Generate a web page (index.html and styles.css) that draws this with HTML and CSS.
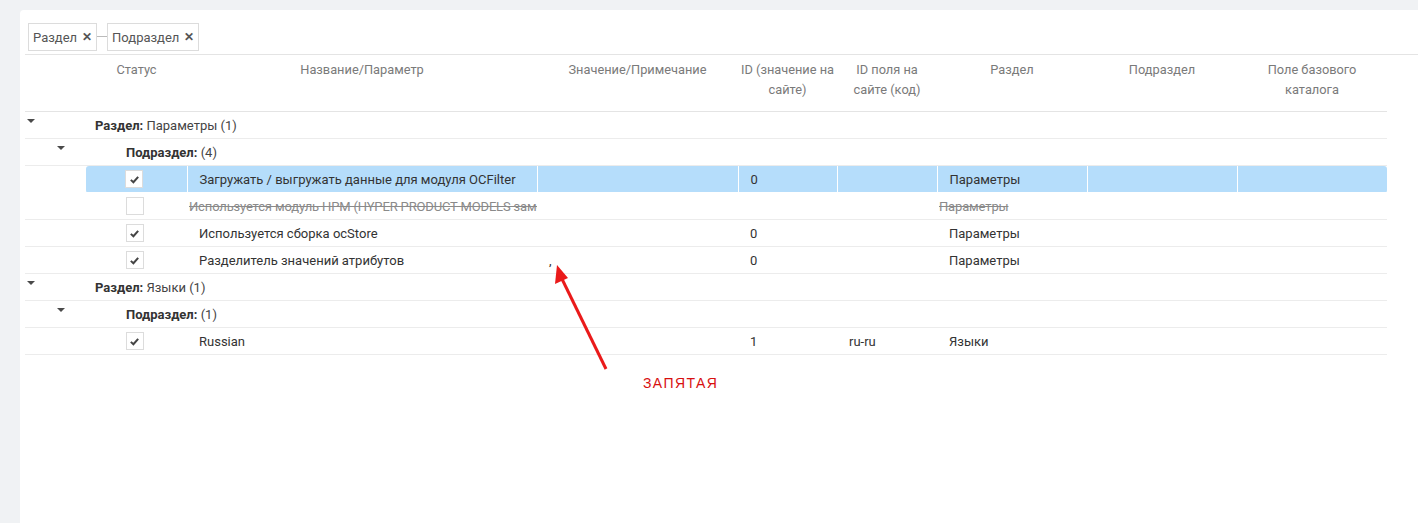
FILE: index.html
```html
<!DOCTYPE html>
<html lang="ru">
<head>
<meta charset="utf-8">
<title>Параметры</title>
<link rel="stylesheet" href="styles.css">
</head>
<body>
<div class="card">
  <div class="group-panel">
    <span class="chip">Раздел <span class="chip-x">✕</span></span>
    <span class="chip-link"></span>
    <span class="chip">Подраздел <span class="chip-x">✕</span></span>
  </div>
  <table class="grid">
    <colgroup>
      <col class="c-exp1"><col class="c-exp2"><col class="c-status"><col class="c-name"><col class="c-value"><col class="c-id"><col class="c-code"><col class="c-sec"><col class="c-sub"><col class="c-base">
    </colgroup>
    <thead>
      <tr class="head">
        <th></th><th></th>
        <th>Статус</th>
        <th>Название/Параметр</th>
        <th>Значение/Примечание</th>
        <th class="h-narrow">ID (значение на сайте)</th>
        <th class="h-narrow">ID поля на сайте (код)</th>
        <th>Раздел</th>
        <th>Подраздел</th>
        <th>Поле базового каталога</th>
      </tr>
    </thead>
    <tbody>
      <tr class="group">
        <td class="exp"><span class="tri"></span></td>
        <td colspan="9" class="g1"><b>Раздел:</b> Параметры (1)</td>
      </tr>
      <tr class="group">
        <td></td>
        <td class="exp"><span class="tri"></span></td>
        <td colspan="8" class="g2"><b>Подраздел:</b> (4)</td>
      </tr>
      <tr class="row selected">
        <td></td><td></td>
        <td class="chk"><span class="box"><svg viewBox="0 0 12 12" class="tick"><path d="M2 6.4 L4.8 9 L10 3.2" /></svg></span></td>
        <td class="first">Загружать / выгружать данные для модуля OCFilter</td>
        <td></td>
        <td>0</td>
        <td></td>
        <td>Параметры</td>
        <td></td>
        <td class="last"></td>
      </tr>
      <tr class="row struck">
        <td></td><td></td>
        <td class="chk"><span class="box"></span></td>
        <td class="clip">Используется модуль HPM (HYPER PRODUCT MODELS замена)</td>
        <td></td>
        <td></td>
        <td></td>
        <td>Параметры</td>
        <td></td>
        <td></td>
      </tr>
      <tr class="row">
        <td></td><td></td>
        <td class="chk"><span class="box"><svg viewBox="0 0 12 12" class="tick"><path d="M2 6.4 L4.8 9 L10 3.2" /></svg></span></td>
        <td>Используется сборка ocStore</td>
        <td></td>
        <td>0</td>
        <td></td>
        <td>Параметры</td>
        <td></td>
        <td></td>
      </tr>
      <tr class="row">
        <td></td><td></td>
        <td class="chk"><span class="box"><svg viewBox="0 0 12 12" class="tick"><path d="M2 6.4 L4.8 9 L10 3.2" /></svg></span></td>
        <td>Разделитель значений атрибутов</td>
        <td class="comma">,</td>
        <td>0</td>
        <td></td>
        <td>Параметры</td>
        <td></td>
        <td></td>
      </tr>
      <tr class="group">
        <td class="exp"><span class="tri"></span></td>
        <td colspan="9" class="g1"><b>Раздел:</b> Языки (1)</td>
      </tr>
      <tr class="group">
        <td></td>
        <td class="exp"><span class="tri"></span></td>
        <td colspan="8" class="g2"><b>Подраздел:</b> (1)</td>
      </tr>
      <tr class="row">
        <td></td><td></td>
        <td class="chk"><span class="box"><svg viewBox="0 0 12 12" class="tick"><path d="M2 6.4 L4.8 9 L10 3.2" /></svg></span></td>
        <td>Russian</td>
        <td></td>
        <td>1</td>
        <td>ru-ru</td>
        <td>Языки</td>
        <td></td>
        <td></td>
      </tr>
    </tbody>
  </table>
</div>
<svg class="annot-arrow" width="1418" height="523" viewBox="0 0 1418 523">
  <line x1="606" y1="369" x2="562" y2="279" />
  <polygon points="557,265 555,284 568,278" />
</svg>
<div class="annot-label">ЗАПЯТАЯ</div>
</body>
</html>
```
FILE: styles.css
```css
html, body {
  margin: 0;
  padding: 0;
}
body {
  background: #f0f2f4;
  font-family: Roboto, "Noto Sans", sans-serif;
  position: relative;
  height: 523px;
  overflow: hidden;
}
.card {
  margin: 10px 0 0 20px;
  background: #fff;
  border-radius: 4px 0 0 0;
  height: 513px;
  padding-left: 5px;
  box-sizing: border-box;
}
.group-panel {
  display: flex;
  align-items: center;
  padding: 13px 0 3px 3px;
  border-bottom: 1px solid #e4e4e4;
}
.chip {
  display: inline-flex;
  align-items: center;
  height: 26px;
  border: 1px solid #dcdcdc;
  padding: 0 4px 0 4px;
  font-size: 13px;
  color: #555;
}
.chip-x {
  font-size: 12px;
  font-weight: bold;
  color: #555;
  margin-left: 5px;
}
.chip-link {
  width: 10px;
  height: 1px;
  background: #bbb;
  margin-top: -2px;
}
.grid {
  border-collapse: collapse;
  table-layout: fixed;
  width: 1362px;
  font-size: 13px;
  color: #333;
}
.c-exp1 { width: 30px; }
.c-exp2 { width: 31px; }
.c-status { width: 101px; }
.c-name { width: 350px; }
.c-value { width: 201px; }
.c-id { width: 99px; }
.c-code { width: 100px; }
.c-sec { width: 150px; }
.c-sub { width: 150px; }
.c-base { width: 150px; }
.head th {
  font-weight: normal;
  color: #7a7a7a;
  font-size: 12.8px;
  line-height: 20px;
  vertical-align: top;
  padding: 5px 12px 11px;
  text-align: center;
  border-bottom: 1px solid #e4e4e4;
}
.head th.h-narrow {
  padding-left: 2px;
  padding-right: 2px;
}
.grid td {
  height: 26px;
  padding: 0 12px;
  border-bottom: 1px solid #ececec;
  white-space: nowrap;
  overflow: hidden;
  vertical-align: middle;
}
.grid td.exp {
  padding: 0;
  vertical-align: top;
}
.tri {
  display: block;
  width: 0;
  height: 0;
  margin: 7px 0 0 2px;
  border-left: 4px solid transparent;
  border-right: 4px solid transparent;
  border-top: 4px solid #4a4a4a;
}
.group td.g1, .group td.g2 {
  padding-left: 40px;
  color: #444;
}
.group b {
  color: #333;
}
.chk {
  text-align: center;
}
.box {
  display: inline-flex;
  align-items: center;
  justify-content: center;
  width: 16px;
  height: 16px;
  border: 1px solid #dcdcdc;
  background: #fff;
  vertical-align: middle;
  margin-left: -4px;
}
.tick {
  width: 11px;
  height: 11px;
}
.tick path {
  fill: none;
  stroke: #444;
  stroke-width: 2.2;
}
.selected td {
  border-bottom-color: #fff;
}
.selected td:nth-child(n+3) {
  background: #b5ddfb;
  border-right: 1px solid #fff;
}
.selected td.chk {
  border-radius: 3px 0 0 3px;
}
.selected td.last {
  border-radius: 0 3px 3px 0;
  border-right: none;
}
.struck td {
  color: #8a8a8a;
  text-decoration: line-through;
  padding: 0 2px;
  letter-spacing: -0.15px;
}
.struck td.clip {
  padding-right: 0;
}
.struck td.chk {
  text-decoration: none;
}
.comma {
  vertical-align: middle;
}
.annot-arrow {
  position: absolute;
  left: 0;
  top: 0;
  pointer-events: none;
}
.annot-arrow line {
  stroke: #ea1a1a;
  stroke-width: 3;
}
.annot-arrow polygon {
  fill: #ea1a1a;
}
.annot-label {
  position: absolute;
  left: 643px;
  top: 375px;
  font-family: "Liberation Sans", Arial, sans-serif;
  font-size: 14px;
  letter-spacing: 1.4px;
  color: #d80f0f;
}
```
